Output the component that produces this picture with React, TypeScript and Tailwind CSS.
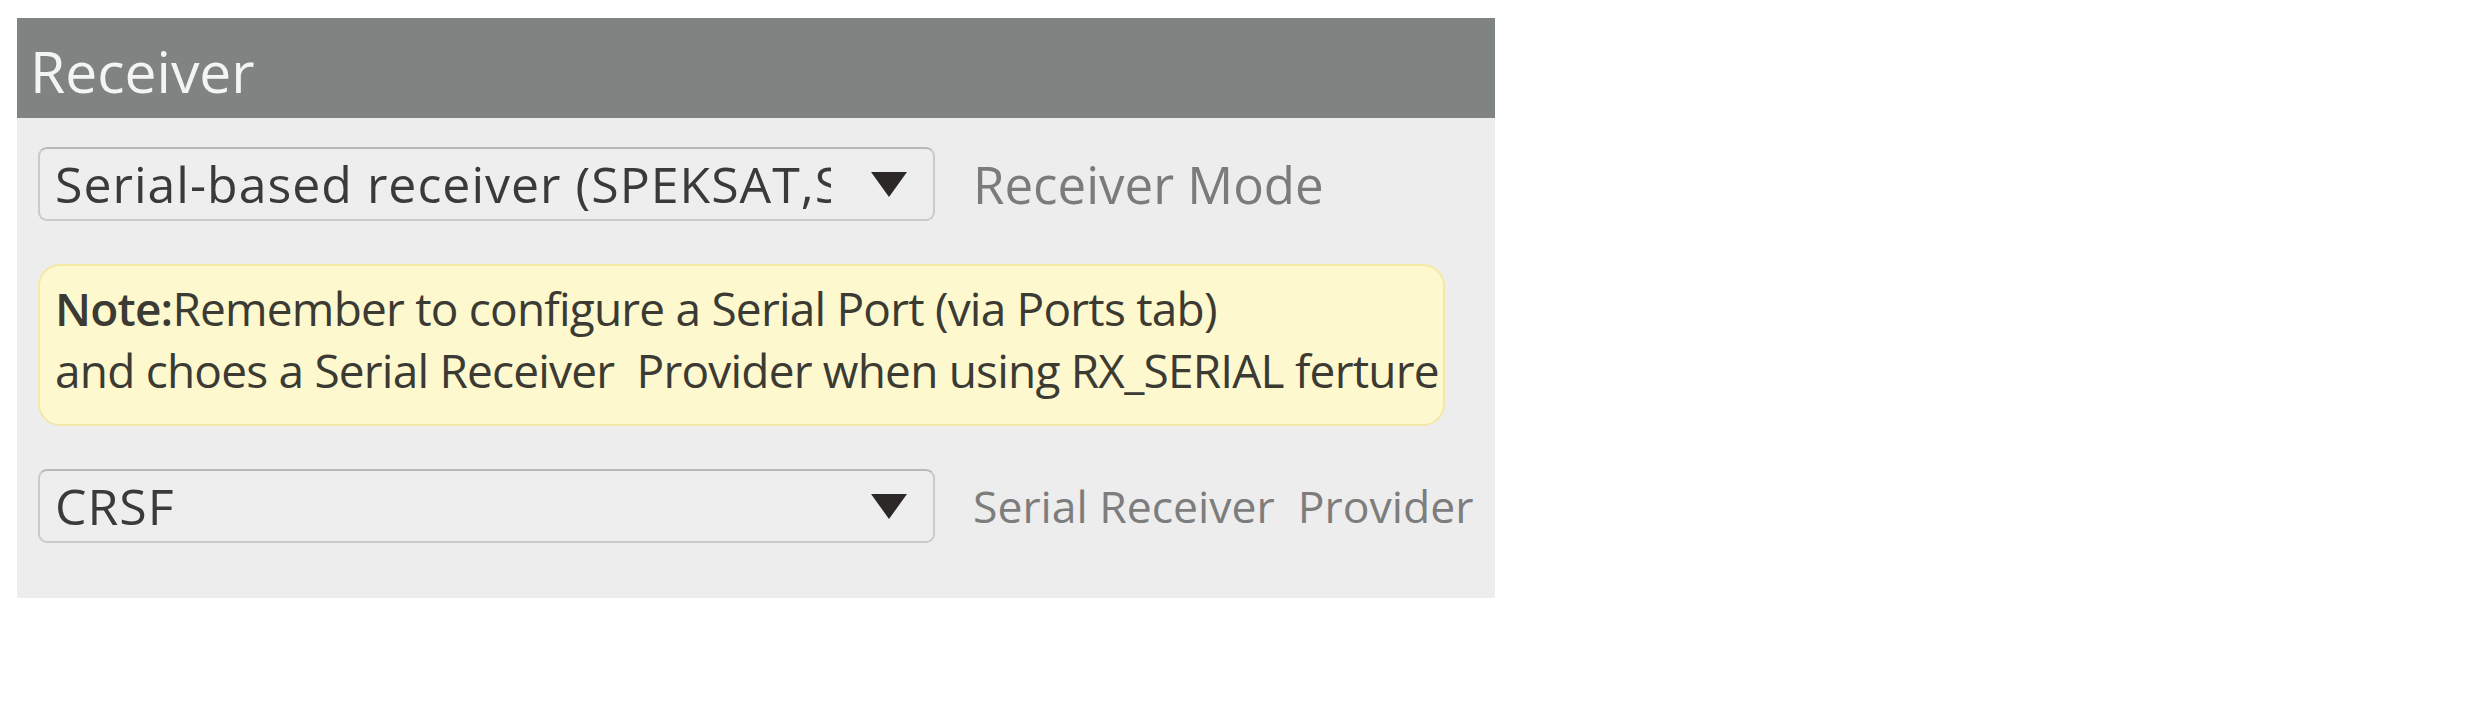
import React from "react";

const Caret = () => (
  <svg width="36" height="25" viewBox="0 0 36 25" className="shrink-0">
    <polygon points="0,0 36,0 18,25" fill="#2b2827" />
  </svg>
);

const SelectBox = ({ value }: { value: string }) => {
  return (
    <div className="flex items-center w-[897px] h-[74px] shrink-0 rounded-[9px] border-2 border-[#cacaca] border-t-[#b9b9b9] bg-[#eeeeee] pl-[15px] pr-[26px]">
      <div className="w-[776px] shrink-0 overflow-hidden whitespace-nowrap text-[50px] tracking-[1px] text-[#3a3a3a]">
        {value}
      </div>
      <div className="ml-auto flex items-center">
        <Caret />
      </div>
    </div>
  );
};

const App = () => {
  return (
    <div className="min-h-screen bg-white pl-[17px] pt-[18px] font-['Open_Sans',sans-serif]">
      <div className="w-[1478px] bg-[#ededed] pb-[55px]">
        <div className="flex items-center h-[100px] bg-[#7f8381] pl-[13px] pt-[6px]">
          <h1 className="text-[57px] text-[#f4f4f4] leading-none">Receiver</h1>
        </div>

        <div className="flex flex-col pl-[21px] pt-[29px]">
          <div className="flex items-center gap-[38px] h-[74px]">
            <SelectBox value="Serial-based receiver (SPEKSAT,SBUS,SUMD)" />
            <span className="text-[51px] leading-[60px] text-[#7b7b7b] whitespace-nowrap">Receiver Mode</span>
          </div>

          <div className="mt-[43px] w-[1407px] h-[162px] rounded-[22px] border-2 border-[#f3e9a6] bg-[#fdf8cd] pl-[15px] pt-[11px] text-[46px] leading-[62px] tracking-[-0.8px] text-[#3b3a33] whitespace-nowrap">
            <p>
              <b className="font-semibold">Note:</b>Remember to configure a Serial Port (via Ports tab)
            </p>
            <p>and choes a Serial Receiver&nbsp; Provider when using RX_SERIAL ferture</p>
          </div>

          <div className="mt-[43px] flex items-center gap-[38px] h-[74px]">
            <SelectBox value="CRSF" />
            <span className="text-[44.5px] leading-[60px] text-[#7d7d7d] whitespace-nowrap">
              Serial Receiver&nbsp; Provider
            </span>
          </div>
        </div>
      </div>
    </div>
  );
};

export default App;
